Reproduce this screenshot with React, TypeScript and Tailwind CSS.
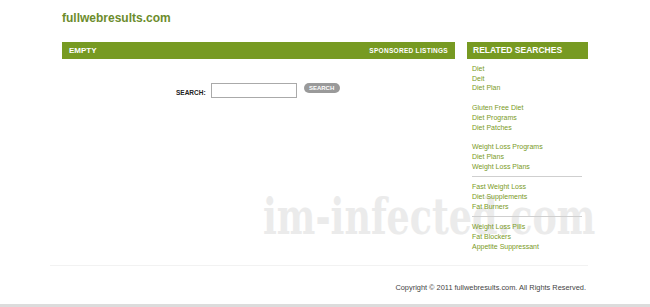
const groups: string[][] = [
  ["Diet", "Deit", "Diet Plan"],
  ["Gluten Free Diet", "Diet Programs", "Diet Patches"],
  ["Weight Loss Programs", "Diet Plans", "Weight Loss Plans"],
  ["Fast Weight Loss", "Diet Supplements", "Fat Burners"],
  ["Weight Loss Pills", "Fat Blockers", "Appetite Suppressant"],
];

const groupClass = [
  "pb-[10px]",
  "pb-[10px]",
  "pb-[5px]",
  "border-t border-[#cfcfcf] pt-[5px] pb-[5px]",
  "border-t border-[#cfcfcf] pt-[5px]",
];

export default function App() {
  return (
    <div className="relative h-[307px] w-[650px] overflow-hidden bg-white font-['Liberation_Sans',Arial,sans-serif]">
      <div className="absolute left-[263px] top-[191px] origin-left scale-x-[0.715] select-none whitespace-nowrap font-['DejaVu_Serif',serif] text-[51px] font-bold leading-none text-[#ebebeb]">
        im-infected.com
      </div>

      <div className="relative ml-[62px] w-[526px] pt-[11px]">
        <h1 className="text-[12px] font-bold leading-[15px] text-[#6c8c2c]">fullwebresults.com</h1>

        <div className="mt-[16px] flex gap-[12px]">
          <div className="w-[393px]">
            <div className="flex h-[17px] items-center justify-between bg-[#779a22] px-[7px] text-white">
              <span className="text-[8px] font-bold">EMPTY</span>
              <span className="text-[6.5px] font-bold tracking-[0.3px]">SPONSORED LISTINGS</span>
            </div>
            <div className="mt-[24px] flex items-start pl-[114px]">
              <span className="mt-[5px] text-[6.5px] font-bold text-[#222]">SEARCH:</span>
              <input className="ml-[5px] h-[15px] w-[86px] border border-[#aaa] bg-white" />
              <button className="ml-[7px] h-[10px] w-[36px] rounded-full bg-[#9a9a9a] text-[6px] font-bold leading-[10px] text-white">
                SEARCH
              </button>
            </div>
          </div>

          <div className="w-[121px]">
            <div className="flex h-[17px] items-center bg-[#779a22] px-[6px] text-[8.5px] font-bold text-white">
              RELATED SEARCHES
            </div>
            <div className="mt-[5px] pl-[5px] pr-[6px]">
              {groups.map((g, i) => (
                <div key={i} className={groupClass[i]}>
                  {g.map((t) => (
                    <div key={t} className="text-[7px] leading-[9.7px] text-[#7a9a1e]">
                      {t}
                    </div>
                  ))}
                </div>
              ))}
            </div>
          </div>
        </div>
      </div>

      <div className="absolute left-[50px] right-[62px] top-[265px] h-px bg-[#f2f2f2]" />
      <div className="absolute right-[64px] top-[282px] text-[7.4px] text-[#444]">
        Copyright © 2011 fullwebresults.com. All Rights Reserved.
      </div>
      <div className="absolute bottom-0 left-0 right-0 h-[3px] bg-[#dcdcdc]" />
    </div>
  );
}
